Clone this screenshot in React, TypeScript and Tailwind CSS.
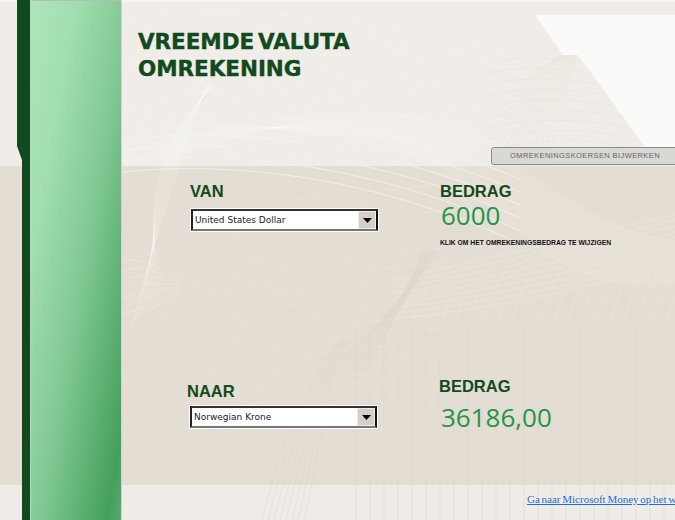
import React from "react"

const sans = "font-['Liberation_Sans',Arial,sans-serif]"
const range = (n: number) => Array.from({ length: n }, (_, i) => i)

// guilloche lines behind the page
function Backdrop() {
  return (
    <svg className="absolute inset-0" width="675" height="520" viewBox="0 0 675 520" fill="none">
      <rect x="0" y="0" width="675" height="166" fill="#f0ede8" />
      <rect x="0" y="166" width="675" height="319" fill="#e4ddd3" />
      <rect x="0" y="485" width="675" height="35" fill="#efece7" />
      <rect x="0" y="0" width="675" height="2" fill="#f8f7f4" />

      {/* soft horizontal lines, upper part */}
      {range(15).map((i) => (
        <path
          key={i}
          d={`M122 ${18 + i * 11}C260 ${4 + i * 11} 400 ${20 + i * 12} 520 ${62 + i * 13}`}
          stroke="#f5f3ef"
          strokeWidth="0.8"
        />
      ))}

      {/* hatch under the white corner */}
      {range(14).map((i) => (
        <path
          key={i}
          d={`M${470 + i * 6} 166C${490 + i * 5} 120 ${520 + i * 4} 75 ${563 + i} 55`}
          stroke="#e8e4dd"
          strokeWidth="0.7"
        />
      ))}
      {range(9).map((i) => (
        <path
          key={i}
          d={`M490 ${150 - i * 11}C530 ${140 - i * 11} 590 ${135 - i * 9} 635 ${150 - i * 10}`}
          stroke="#e8e4dd"
          strokeWidth="0.7"
        />
      ))}

      {/* light corner top right */}
      <path d="M535 15H675V147H645L578 55H563Z" fill="#fbfaf8" />

      {/* white sweep over the band edge */}
      <path d="M122 166C220 150 320 120 400 145C450 160 490 215 540 250C590 285 640 290 675 285V240C620 235 570 200 520 166L480 130C410 100 300 105 122 150Z" fill="#ffffff" opacity="0.1" />
      {range(10).map((i) => (
        <path
          key={i}
          d={`M122 ${168 - i * 3}C200 ${150 - i * 4} 300 ${110 + i * 2} 370 ${122 + i * 2}S450 ${170 + i * 3} 480 ${190 + i * 4}`}
          stroke="#ffffff"
          strokeWidth="0.7"
          opacity="0.2"
        />
      ))}

      {/* fan below the title */}
      {range(12).map((i) => (
        <path
          key={i}
          d={`M${206 + i * 0.8} 85C${190 - i * 2} 130 ${170 - i * 3} 190 ${130 + i * 3} ${330 - i * 4}`}
          stroke="#ffffff"
          strokeWidth="0.6"
          opacity="0.3"
        />
      ))}
      {range(8).map((i) => (
        <path
          key={i}
          d={`M122 ${262 + i * 9}C140 ${255 + i * 9} 165 ${270 + i * 4} 180 ${280 + i * 2}`}
          stroke="#ffffff"
          strokeWidth="0.6"
          opacity="0.3"
        />
      ))}

      {/* long faint arcs across the band */}
      {range(18).map((i) => (
        <path
          key={i}
          d={`M122 ${230 + i * 14}C240 ${205 + i * 13} 320 ${195 + i * 13} 440 ${185 + i * 13}`}
          stroke="#ece6dd"
          strokeWidth="0.7"
          opacity="0.7"
        />
      ))}

      {/* crosshatched sweep, right side */}
      {range(9).map((i) => (
        <path
          key={i}
          d={`M395 ${318 - i * 5}C470 ${312 - i * 6} 590 ${290 - i * 7} 675 ${262 - i * 6}`}
          stroke="#ebe5dc"
          strokeWidth="0.7"
        />
      ))}
      {range(20).map((i) => (
        <path
          key={i}
          d={`M${400 + i * 14} 320C${408 + i * 14} 290 ${425 + i * 14} 262 ${445 + i * 14} 240`}
          stroke="#ebe5dc"
          strokeWidth="0.7"
        />
      ))}

      {/* dark fan, middle */}
      {range(9).map((i) => (
        <path
          key={i}
          d={`M${362 - i * 5} 380C${380 - i * 3} 340 ${410} ${290 + i * 2} ${438 - i * 2} 250`}
          stroke="#d9d1c5"
          strokeWidth="0.7"
          opacity="0.8"
        />
      ))}
      {range(8).map((i) => (
        <path
          key={i}
          d={`M${262 + i * 6} 520C${280 + i * 6} 450 ${300 + i * 3} 390 ${340 + i} 340`}
          stroke="#d9d1c5"
          strokeWidth="0.7"
          opacity="0.6"
        />
      ))}

      {/* verticals, lower right */}
      {range(24).map((i) => (
        <path key={i} d={`M${356 + i * 14} 330V520`} stroke="#dad3c7" strokeWidth="0.8" opacity="0.65" />
      ))}
    </svg>
  )
}

// green bar with dark strip on the left
function SideRail() {
  return (
    <div className="relative flex h-full w-[122px] shrink-0">
      <svg className="shrink-0" width="31" height="520" viewBox="0 0 31 520">
        <path d="M17 0H30V520H22V160L17 146Z" fill="#124a20" />
        <rect x="30" y="0" width="1" height="520" fill="#bcd3bf" />
      </svg>
      <div className="h-full flex-1 border-r border-[#cfd6c9] bg-[linear-gradient(to_bottom_right,#aee6b9_0%,#a2deb0_25%,#80c893_55%,#44a05c_92%,#55ab6c_100%)]">
        <div className="h-px bg-[#b5bdb5]" />
      </div>
    </div>
  )
}

function CurrencySelect({ value }: { value: string }) {
  return (
    <div className="flex h-[24px] w-[189px] border border-white">
      <div className="flex flex-1 items-stretch border-2 border-t-[#333] border-l-[#222] border-b-[#777] border-r-[#111] bg-white">
        <span className="flex-1 self-center pl-[2px] font-['DejaVu_Sans',Verdana,sans-serif] text-[9px] leading-none text-[#222]">
          {value}
        </span>
        <div className="flex w-[18px] items-center justify-center border border-[#efede8] bg-[#d4d0c8]">
          <svg width="9" height="5" viewBox="0 0 9 5">
            <path d="M0 0H9L4.5 5Z" fill="#000" />
          </svg>
        </div>
      </div>
    </div>
  )
}

function FieldLabel({ children }: { children: React.ReactNode }) {
  return <div className={`${sans} text-[16.5px] font-bold leading-[20px] text-[#124a20]`}>{children}</div>
}

function Amount({ children }: { children: React.ReactNode }) {
  return <div className="font-['Open_Sans',sans-serif] text-[26px] leading-[28px] text-[#1f9648]">{children}</div>
}

export default function App() {
  return (
    <div className="relative h-[520px] w-[675px] overflow-hidden bg-[#f0ede8]">
      <Backdrop />
      <div className="relative flex h-full">
        <SideRail />
        <div className="flex min-w-0 flex-1 flex-col">
          <h1 className="h-[147px] pl-[16px] pt-[28px] font-['DejaVu_Sans',Verdana,sans-serif] text-[21.5px] font-bold leading-[27px] tracking-[-0.05px] [word-spacing:-3.5px] text-[#124a20] [-webkit-text-stroke:0.4px_#124a20]">
            VREEMDE VALUTA
            <br />
            OMREKENING
          </h1>

          <div className="flex justify-end">
            <button className="-mr-2 flex h-[18px] w-[192px] items-center rounded-l-[3px] border border-[#8a8a88] bg-[#d9d8d5] pl-[18px] font-['Liberation_Sans',Arial,sans-serif] text-[7.5px] tracking-[0.4px] text-[#666]">
              OMREKENINGSKOERSEN BIJWERKEN
            </button>
          </div>

          <div className="grid grid-cols-[250px_1fr] pl-[68px] pt-[16px]">
            <div>
              <FieldLabel>VAN</FieldLabel>
              <div className="mt-[7px]">
                <CurrencySelect value="United States Dollar" />
              </div>
            </div>
            <div>
              <FieldLabel>BEDRAG</FieldLabel>
              <div className="pl-[1px]">
                <Amount>6000</Amount>
              </div>
              <div className={`${sans} mt-[9px] whitespace-nowrap text-[6.75px] font-bold leading-[10px] text-[#111]`}>
                KLIK OM HET OMREKENINGSBEDRAG TE WIJZIGEN
              </div>
            </div>
          </div>

          <div className="grid grid-cols-[252px_1fr] pl-[65px] pt-[128px]">
            <div className="pt-[5px]">
              <FieldLabel>NAAR</FieldLabel>
              <div className="ml-[2px] mt-[4px]">
                <CurrencySelect value="Norwegian Krone" />
              </div>
            </div>
            <div>
              <FieldLabel>BEDRAG</FieldLabel>
              <div className="mt-[7px] pl-[2px]">
                <Amount>36186,00</Amount>
              </div>
            </div>
          </div>

          <div className="mt-auto h-[31px] whitespace-nowrap pl-[405px] leading-[16px]">
            <a className="font-['Liberation_Serif',serif] text-[11px] [word-spacing:-1px] text-[#1a6fd8] underline">
              Ga naar Microsoft Money op het web
            </a>
          </div>
        </div>
      </div>
    </div>
  )
}
